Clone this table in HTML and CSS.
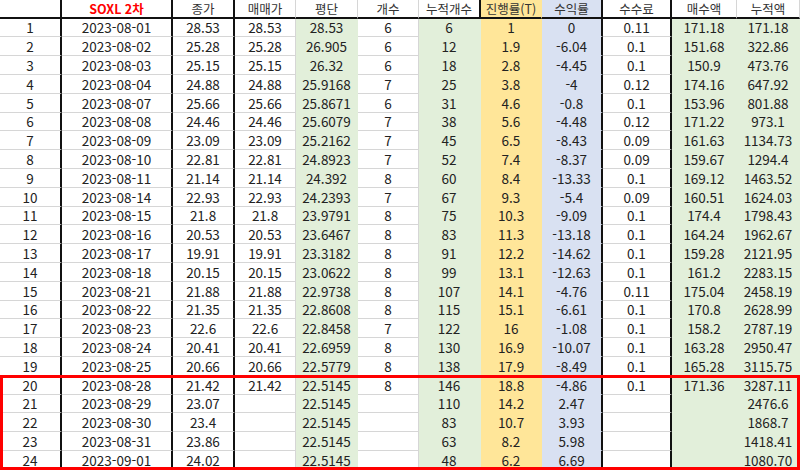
FILE: index.html
```html
<!DOCTYPE html>
<html lang="ko">
<head>
<meta charset="utf-8">
<title>SOXL 2차</title>
<link rel="stylesheet" href="styles.css">
</head>
<body>
<div class="sheet">
  <div class="row head"><div></div><div class="title">SOXL 2차</div><div>종가</div><div>매매가</div><div>평단</div><div>개수</div><div>누적개수</div><div>진행률(T)</div><div>수익률</div><div>수수료</div><div>매수액</div><div>누적액</div></div>
  <div class="row"><div>1</div><div>2023-08-01</div><div>28.53</div><div>28.53</div><div>28.53</div><div>6</div><div>6</div><div>1</div><div>0</div><div>0.11</div><div>171.18</div><div>171.18</div></div>
  <div class="row"><div>2</div><div>2023-08-02</div><div>25.28</div><div>25.28</div><div>26.905</div><div>6</div><div>12</div><div>1.9</div><div>-6.04</div><div>0.1</div><div>151.68</div><div>322.86</div></div>
  <div class="row"><div>3</div><div>2023-08-03</div><div>25.15</div><div>25.15</div><div>26.32</div><div>6</div><div>18</div><div>2.8</div><div>-4.45</div><div>0.1</div><div>150.9</div><div>473.76</div></div>
  <div class="row"><div>4</div><div>2023-08-04</div><div>24.88</div><div>24.88</div><div>25.9168</div><div>7</div><div>25</div><div>3.8</div><div>-4</div><div>0.12</div><div>174.16</div><div>647.92</div></div>
  <div class="row"><div>5</div><div>2023-08-07</div><div>25.66</div><div>25.66</div><div>25.8671</div><div>6</div><div>31</div><div>4.6</div><div>-0.8</div><div>0.1</div><div>153.96</div><div>801.88</div></div>
  <div class="row"><div>6</div><div>2023-08-08</div><div>24.46</div><div>24.46</div><div>25.6079</div><div>7</div><div>38</div><div>5.6</div><div>-4.48</div><div>0.12</div><div>171.22</div><div>973.1</div></div>
  <div class="row"><div>7</div><div>2023-08-09</div><div>23.09</div><div>23.09</div><div>25.2162</div><div>7</div><div>45</div><div>6.5</div><div>-8.43</div><div>0.09</div><div>161.63</div><div>1134.73</div></div>
  <div class="row"><div>8</div><div>2023-08-10</div><div>22.81</div><div>22.81</div><div>24.8923</div><div>7</div><div>52</div><div>7.4</div><div>-8.37</div><div>0.09</div><div>159.67</div><div>1294.4</div></div>
  <div class="row"><div>9</div><div>2023-08-11</div><div>21.14</div><div>21.14</div><div>24.392</div><div>8</div><div>60</div><div>8.4</div><div>-13.33</div><div>0.1</div><div>169.12</div><div>1463.52</div></div>
  <div class="row"><div>10</div><div>2023-08-14</div><div>22.93</div><div>22.93</div><div>24.2393</div><div>7</div><div>67</div><div>9.3</div><div>-5.4</div><div>0.09</div><div>160.51</div><div>1624.03</div></div>
  <div class="row"><div>11</div><div>2023-08-15</div><div>21.8</div><div>21.8</div><div>23.9791</div><div>8</div><div>75</div><div>10.3</div><div>-9.09</div><div>0.1</div><div>174.4</div><div>1798.43</div></div>
  <div class="row"><div>12</div><div>2023-08-16</div><div>20.53</div><div>20.53</div><div>23.6467</div><div>8</div><div>83</div><div>11.3</div><div>-13.18</div><div>0.1</div><div>164.24</div><div>1962.67</div></div>
  <div class="row"><div>13</div><div>2023-08-17</div><div>19.91</div><div>19.91</div><div>23.3182</div><div>8</div><div>91</div><div>12.2</div><div>-14.62</div><div>0.1</div><div>159.28</div><div>2121.95</div></div>
  <div class="row"><div>14</div><div>2023-08-18</div><div>20.15</div><div>20.15</div><div>23.0622</div><div>8</div><div>99</div><div>13.1</div><div>-12.63</div><div>0.1</div><div>161.2</div><div>2283.15</div></div>
  <div class="row"><div>15</div><div>2023-08-21</div><div>21.88</div><div>21.88</div><div>22.9738</div><div>8</div><div>107</div><div>14.1</div><div>-4.76</div><div>0.11</div><div>175.04</div><div>2458.19</div></div>
  <div class="row"><div>16</div><div>2023-08-22</div><div>21.35</div><div>21.35</div><div>22.8608</div><div>8</div><div>115</div><div>15.1</div><div>-6.61</div><div>0.1</div><div>170.8</div><div>2628.99</div></div>
  <div class="row"><div>17</div><div>2023-08-23</div><div>22.6</div><div>22.6</div><div>22.8458</div><div>7</div><div>122</div><div>16</div><div>-1.08</div><div>0.1</div><div>158.2</div><div>2787.19</div></div>
  <div class="row"><div>18</div><div>2023-08-24</div><div>20.41</div><div>20.41</div><div>22.6959</div><div>8</div><div>130</div><div>16.9</div><div>-10.07</div><div>0.1</div><div>163.28</div><div>2950.47</div></div>
  <div class="row"><div>19</div><div>2023-08-25</div><div>20.66</div><div>20.66</div><div>22.5779</div><div>8</div><div>138</div><div>17.9</div><div>-8.49</div><div>0.1</div><div>165.28</div><div>3115.75</div></div>
  <div class="row"><div>20</div><div>2023-08-28</div><div>21.42</div><div>21.42</div><div>22.5145</div><div>8</div><div>146</div><div>18.8</div><div>-4.86</div><div>0.1</div><div>171.36</div><div>3287.11</div></div>
  <div class="row"><div>21</div><div>2023-08-29</div><div>23.07</div><div></div><div>22.5145</div><div></div><div>110</div><div>14.2</div><div>2.47</div><div></div><div></div><div>2476.6</div></div>
  <div class="row"><div>22</div><div>2023-08-30</div><div>23.4</div><div></div><div>22.5145</div><div></div><div>83</div><div>10.7</div><div>3.93</div><div></div><div></div><div>1868.7</div></div>
  <div class="row"><div>23</div><div>2023-08-31</div><div>23.86</div><div></div><div>22.5145</div><div></div><div>63</div><div>8.2</div><div>5.98</div><div></div><div></div><div>1418.41</div></div>
  <div class="row"><div>24</div><div>2023-09-01</div><div>24.02</div><div></div><div>22.5145</div><div></div><div>48</div><div>6.2</div><div>6.69</div><div></div><div></div><div>1080.70</div></div>
  <div class="mark"></div>
</div>
</body>
</html>
```

FILE: styles.css
```css
* { box-sizing: border-box; }

html, body {
  margin: 0;
  padding: 0;
  background: #ffffff;
  overflow: hidden;
}

body {
  width: 800px;
  height: 470px;
  font-family: "Noto Sans CJK KR", "Noto Sans", sans-serif;
  color: #222222;
}

.sheet {
  position: relative;
  display: grid;
  grid-template-columns: 62px 111px 62px 61px 62px 61px 62px 61px 61px 69px 65px 63px;
  grid-template-rows: 18.7px repeat(24, 18.8px);
  width: 800px;
}

.row { display: contents; }

.row > div {
  display: flex;
  align-items: center;
  justify-content: center;
  font-size: 13.5px;
  line-height: 1.2;
  white-space: nowrap;
  border-right: 1px solid #d6d6d6;
  border-bottom: 1px solid #d6d6d6;
  background: #ffffff;
}

/* filled columns (data rows) */
.row:not(.head) > div:nth-child(5),
.row:not(.head) > div:nth-child(7),
.row:not(.head) > div:nth-child(11),
.row:not(.head) > div:nth-child(12) {
  background: #e2efda;
  border-color: #e2efda;
}

.row > div:nth-child(8) {
  background: #ffe699;
  border-color: #ffe699;
}

.row > div:nth-child(9) {
  background: #d9e1f2;
  border-color: #d9e1f2;
}

/* thick black column separators */
.row > div:nth-child(1),
.row > div:nth-child(2),
.row > div:nth-child(3),
.row > div:nth-child(7),
.row > div:nth-child(9),
.row > div:nth-child(10) {
  border-right: 2px solid #111111;
}

/* header row */
.head > div {
  font-size: 12.5px;
  line-height: 1;
  padding-top: 2px;
  color: #333333;
  border-bottom: 2px solid #111111 !important;
}

.head > div:nth-child(5),
.head > div:nth-child(11) {
  border-right-color: #d6d6d6;
}

.head > .title {
  color: #ff0000;
  font-weight: 700;
  font-size: 12.5px;
}

/* red highlight box drawn over rows 20-24 */
.mark {
  position: absolute;
  grid-row: 21 / 26;
  grid-column: 1 / -1;
  top: -1px;
  left: 0;
  right: 0;
  bottom: 0;
  border: 3px solid #ff0000;
  pointer-events: none;
}
```
